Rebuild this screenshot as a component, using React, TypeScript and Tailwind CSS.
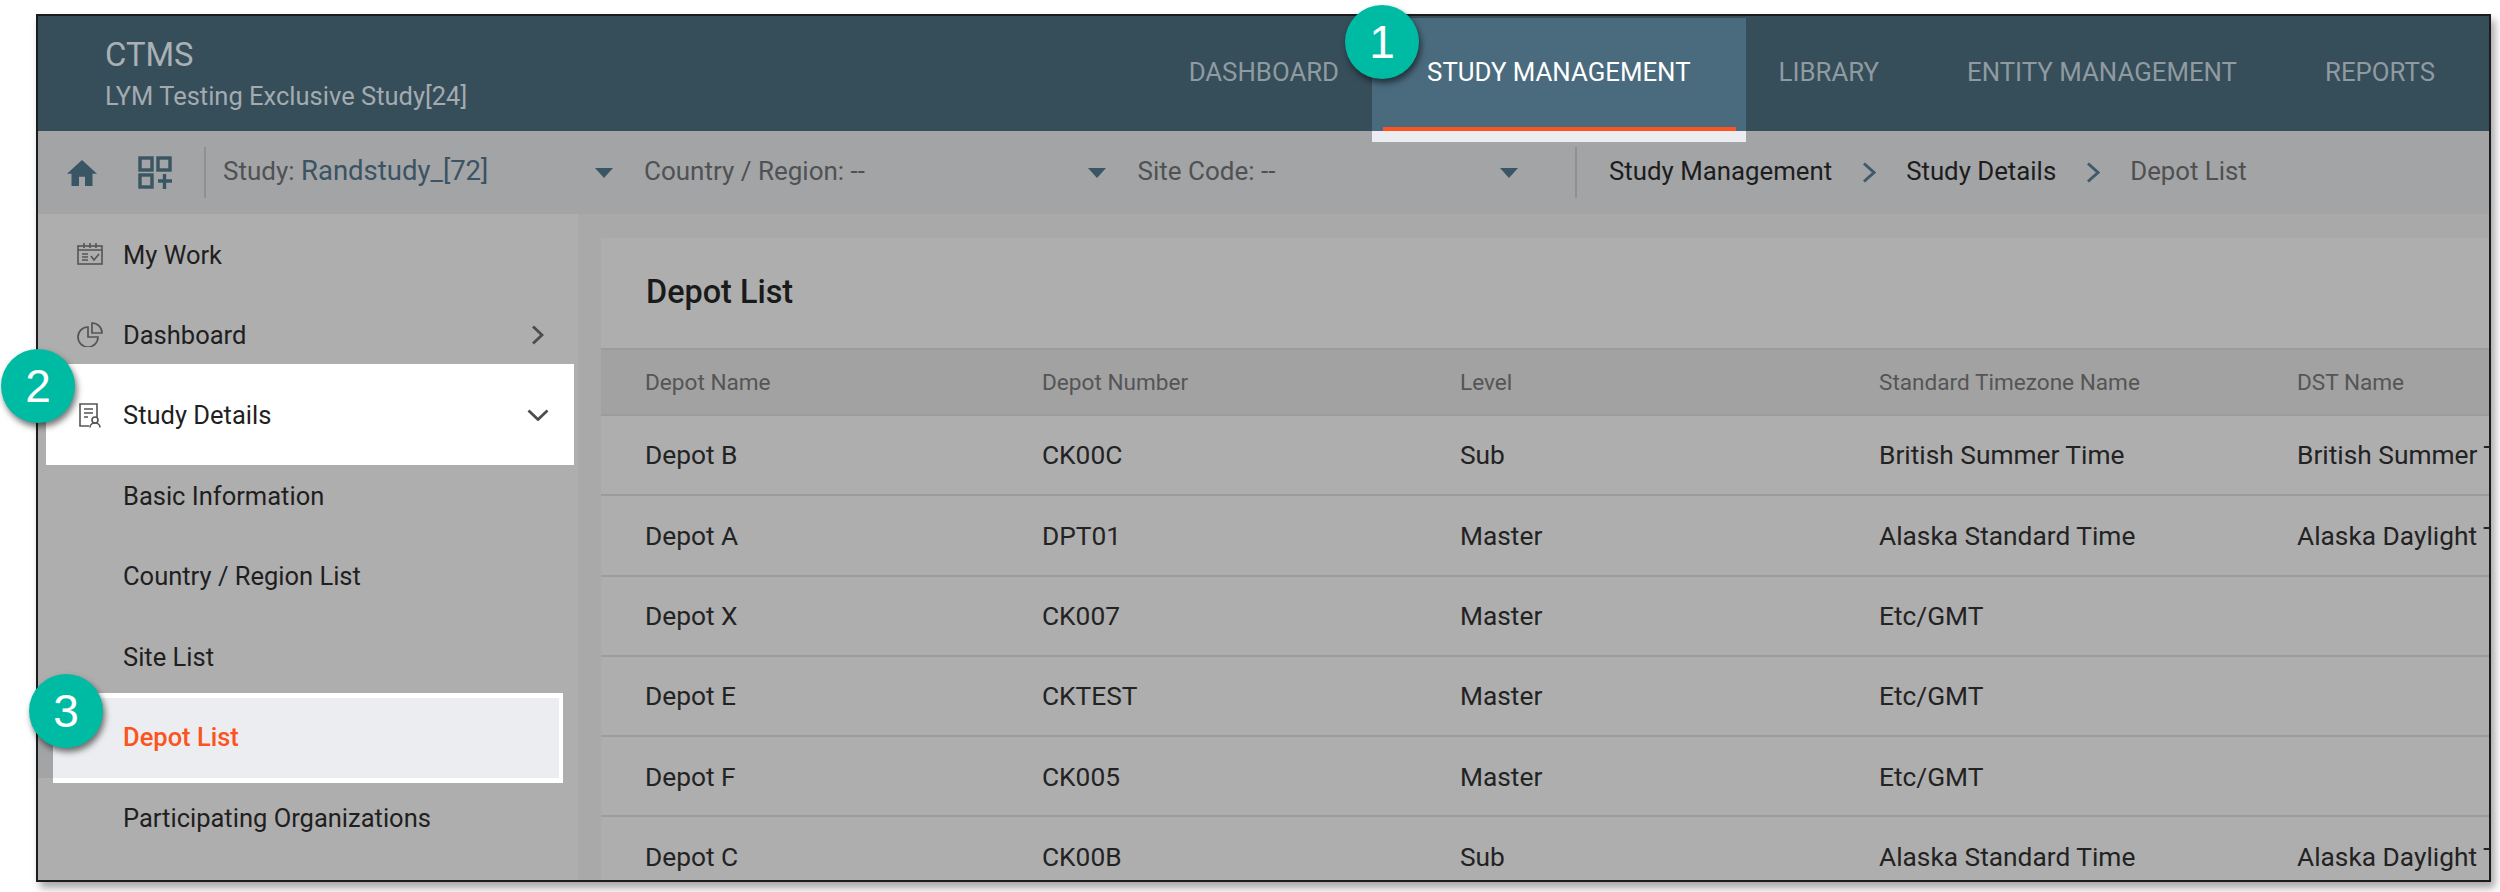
const navItems = ["DASHBOARD", "STUDY MANAGEMENT", "LIBRARY", "ENTITY MANAGEMENT", "REPORTS"];

const sideItems = [
  { label: "Basic Information" },
  { label: "Country / Region List" },
  { label: "Site List" },
];

const rows = [
  ["Depot B", "CK00C", "Sub", "British Summer Time", "British Summer Time"],
  ["Depot A", "DPT01", "Master", "Alaska Standard Time", "Alaska Daylight Time"],
  ["Depot X", "CK007", "Master", "Etc/GMT", ""],
  ["Depot E", "CKTEST", "Master", "Etc/GMT", ""],
  ["Depot F", "CK005", "Master", "Etc/GMT", ""],
  ["Depot C", "CK00B", "Sub", "Alaska Standard Time", "Alaska Daylight Time"],
];

function Caret() {
  return (
    <svg width="18" height="10" viewBox="0 0 18 10" className="shrink-0">
      <path d="M0 0h18L9 10z" fill="#3a5563" />
    </svg>
  );
}

function Crumb() {
  return (
    <svg width="14" height="21" viewBox="0 0 14 21" className="shrink-0">
      <path d="M2 1.5l10 9-10 9" fill="none" stroke="#3f5a69" strokeWidth="3" />
    </svg>
  );
}

function Select({ label, value, width, valueClass }: { label: string; value: string; width: string; valueClass: string }) {
  return (
    <div className={`flex items-center justify-between ${width}`}>
      <span className="pb-[3px] text-[26px] text-[#4f5254]">
        {label} <span className={valueClass}>{value}</span>
      </span>
      <Caret />
    </div>
  );
}

function Badge({ n, className }: { n: number; className: string }) {
  return (
    <div
      className={`absolute flex h-[74px] w-[74px] items-center justify-center rounded-full bg-[#00bba3] font-['Liberation_Sans',sans-serif] text-[46px] leading-none text-white shadow-[2px_4px_6px_rgba(0,0,0,0.55)] ${className}`}
    >
      {n}
    </div>
  );
}

export default function App() {
  return (
    <div className="relative h-[892px] w-[2500px] overflow-hidden bg-white font-['Roboto',sans-serif]">
      <div className="ml-[36px] mt-[14px] flex h-[868px] w-[2455px] flex-col overflow-hidden border-2 border-[#1c1c1c] shadow-[4px_6px_8px_rgba(0,0,0,0.35)]">
        {/* top bar */}
        <header className="flex h-[115px] shrink-0 bg-[#364d5a]">
          <div className="pl-[67px] pt-[20px]">
            <div className="text-[32.8px] leading-[38px] text-[#a9b1b5]">CTMS</div>
            <div className="mt-[6px] text-[25.5px] leading-[32px] text-[#a3abb0]">LYM Testing Exclusive Study[24]</div>
          </div>
          <nav className="ml-auto flex pr-[10px]">
            {navItems.map((item) => {
              const active = item === "STUDY MANAGEMENT";
              return (
                <div
                  key={item}
                  className={`relative flex items-center px-[44px] pb-[3px] text-[25.8px] ${active ? "text-white" : "text-[#8f9ba1]"}`}
                >
                  {active && (
                    <div className="absolute left-[-11px] right-[-11px] top-[2px] bottom-[-11px] bg-[#ecedf0]">
                      <div className="h-[113px] bg-[#4a6b7e]" />
                      <div className="absolute bottom-[11px] left-[11px] right-[10px] h-[4px] bg-[#fb5420]" />
                    </div>
                  )}
                  <span className="relative">{item}</span>
                </div>
              );
            })}
          </nav>
        </header>

        {/* filter bar */}
        <div className="flex h-[83px] shrink-0 items-center bg-[#a3a4a6] pl-[29px]">
          <svg width="30" height="26" viewBox="2 3 20 17" preserveAspectRatio="none" className="shrink-0">
            <path d="M10 20v-6h4v6h5v-8h3L12 3 2 12h3v8z" fill="#3a5563" />
          </svg>
          <svg width="34" height="33" viewBox="0 0 34 33" className="ml-[41px] shrink-0">
            <g fill="none" stroke="#3a5563" strokeWidth="3.4">
              <rect x="2" y="2" width="12" height="12" />
              <rect x="20" y="2" width="12" height="12" />
              <rect x="2" y="19" width="12" height="12" />
              <path d="M20 25h14M26.5 18v15" />
            </g>
          </svg>
          <div className="ml-[32px] h-[51px] w-[2px] bg-[#8f9092]" />
          <Select label="Study:" value="Randstudy_[72]" width="ml-[17px] w-[390px]" valueClass="text-[27.5px] text-[#3b5362]" />
          <Select label="Country / Region:" value="--" width="ml-[31px] w-[462px]" valueClass="" />
          <Select label="Site Code:" value="--" width="ml-[31.5px] w-[380.5px]" valueClass="" />
          <div className="ml-[57px] h-[51px] w-[2px] bg-[#8f9092]" />
          <div className="ml-[32px] flex items-center text-[25.8px] text-[#1d1d1d]">
            <span className="pb-[3px]">Study Management</span>
            <span className="mx-[30px]"><Crumb /></span>
            <span className="pb-[3px]">Study Details</span>
            <span className="mx-[30px]"><Crumb /></span>
            <span className="pb-[3px] text-[#505050]">Depot List</span>
          </div>
        </div>

        <div className="flex min-h-0 flex-1">
          {/* sidebar */}
          <aside className="w-[540px] shrink-0 bg-[#aeaeae] text-[25.5px] text-[#1f1f1f]">
            <div className="flex h-[80.5px] items-center">
              <svg width="26" height="22" viewBox="0 0 26 22" className="ml-[39px] shrink-0">
                <g fill="none" stroke="#555" strokeWidth="1.6">
                  <rect x="1" y="3" width="24" height="18" />
                  <path d="M1 7h24M7 0v5M13 0v5M19 0v5M5 11h6M5 14h6M5 17h6M14 13l3 4 5-6" />
                </g>
              </svg>
              <span className="ml-[20px] pt-[1px]">My Work</span>
            </div>
            <div className="flex h-[80.5px] items-center">
              <svg width="26" height="25" viewBox="0 0 26 25" className="ml-[39px] shrink-0">
                <g fill="none" stroke="#555" strokeWidth="1.7">
                  <path d="M11 5a10 10 0 1 0 10 10H11z" />
                  <path d="M15 1a10 10 0 0 1 10 10H15z" />
                </g>
              </svg>
              <span className="ml-[20px]">Dashboard</span>
              <svg width="14" height="20" viewBox="0 0 14 20" className="ml-auto mr-[33px] shrink-0">
                <path d="M2 1.5l9 8.5-9 8.5" fill="none" stroke="#4d4d4d" strokeWidth="2.8" />
              </svg>
            </div>
            <div className="relative flex h-[80.5px] items-center">
              <div className="absolute bottom-[-9px] left-[8px] right-[4px] top-[-11px] bg-white" />
              <svg width="22" height="25" viewBox="0 0 22 25" className="relative ml-[41px] shrink-0">
                <g fill="none" stroke="#555" strokeWidth="1.6">
                  <path d="M10 23H1V1h17v13" />
                  <path d="M5 6h9M5 10h9M5 14h4" />
                  <circle cx="16" cy="17" r="3" />
                  <path d="M11 24.5c0-6 10-6 10 0" />
                </g>
              </svg>
              <span className="relative ml-[22px]">Study Details</span>
              <svg width="22" height="12" viewBox="0 0 22 12" className="relative ml-auto mr-[29px] shrink-0">
                <path d="M1.5 1.5l9.5 9 9.5-9" fill="none" stroke="#4d4d4d" strokeWidth="2.8" />
              </svg>
            </div>
            {sideItems.map((item) => (
              <div key={item.label} className="flex h-[80.5px] items-center pl-[85px]">
                {item.label}
              </div>
            ))}
            <div className="relative flex h-[80.5px] items-center bg-[linear-gradient(90deg,#a3a4a6_16px,transparent_16px)] pl-[85px] text-[#fb5420]">
              <div className="absolute bottom-[-5px] left-[15px] right-[15px] top-[-4px] border-y-[5px] border-r-[4px] border-white bg-[#ecedf0]" />
              <span className="relative font-medium">Depot List</span>
            </div>
            <div className="flex h-[80.5px] items-center pl-[85px]">Participating Organizations</div>
          </aside>

          {/* main */}
          <main className="min-w-0 flex-1 bg-[#a9a9a9] pl-[23px] pt-[24px]">
            <div className="h-full overflow-hidden bg-[#aeaeae]">
              <h1 className="flex h-[110px] items-center pl-[45px] pb-[2px] text-[32.4px] font-medium text-[#1a1a1a]">Depot List</h1>
              <div className="grid h-[68px] grid-cols-[397px_418px_419px_418px_1fr] items-center border-y-2 border-[#9c9c9c] bg-[#a2a2a2] pl-[44px] pt-[1px] text-[22.6px] text-[#555]">
                <span>Depot Name</span>
                <span>Depot Number</span>
                <span>Level</span>
                <span>Standard Timezone Name</span>
                <span>DST Name</span>
              </div>
              {rows.map((row) => (
                <div
                  key={row[0]}
                  className="grid h-[80.3px] grid-cols-[397px_418px_419px_418px_1fr] items-center whitespace-nowrap border-b-2 border-[#9c9c9c] pl-[44px] pt-[2px] text-[26.3px] text-[#232323]"
                >
                  {row.map((cell, i) => (
                    <span key={i}>{cell}</span>
                  ))}
                </div>
              ))}
            </div>
          </main>
        </div>
      </div>

      <Badge n={1} className="left-[1345px] top-[5px]" />
      <Badge n={2} className="left-[1px] top-[349px]" />
      <Badge n={3} className="left-[29px] top-[674px]" />
    </div>
  );
}
